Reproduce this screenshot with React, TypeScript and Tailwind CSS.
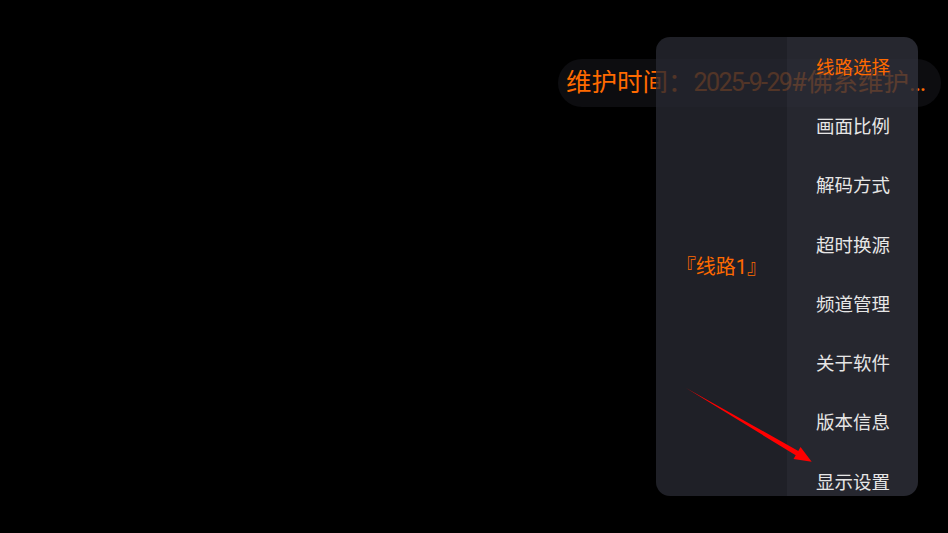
import React from 'react';

const menuItems = ['线路选择', '画面比例', '解码方式', '超时换源', '频道管理', '关于软件', '版本信息', '显示设置'];

const font = { fontFamily: 'Roboto, "Noto Sans CJK SC", "Noto Sans", sans-serif' };

export default function App() {
    const active = 0;

    return (
        <div className="relative w-[948px] h-[533px] bg-black overflow-hidden" style={font}>
            {/* marquee notice */}
            <div className="flex justify-end pt-[59px] pr-[7px]">
                <div className="w-[383px] h-[48px] rounded-full bg-[#0d0d10] flex items-center pl-[8px] pr-[6px]">
                    <p className="truncate text-[25.5px] leading-none text-[#ff6a00]">
                        维护时间：<span className="text-[25px] tracking-[-1.6px]">2025-9-29</span>#佛系维护，不定时更新
                    </p>
                </div>
            </div>

            {/* settings panel */}
            <div className="absolute left-[656px] top-[37px] w-[262px] h-[459px] rounded-[14px] overflow-hidden flex">
                <div className="w-[131px] bg-[#272831]/80 flex items-center justify-center">
                    <span className="text-[20px] text-[#ff6a00]">『线路1』</span>
                </div>
                <div className="w-[131px] bg-[#30313b]/80 flex flex-col pt-[2px]">
                    {menuItems.map((item, i) => (
                        <div key={item} className="h-[59.25px] shrink-0 flex items-center pl-[29px]">
                            <span className={`text-[18.5px] ${i === active ? 'text-[#ff6a00]' : 'text-[#e6e6e6]'}`}>{item}</span>
                        </div>
                    ))}
                </div>
            </div>

            {/* annotation arrow */}
            <svg className="absolute left-0 top-0 pointer-events-none" width="948" height="533" viewBox="0 0 948 533">
                <polygon points="686,388 798.3,450.9 800.5,447.1 811.7,461.7 793.5,459.1 795.7,455.3" fill="#ff0000" />
            </svg>
        </div>
    );
}
